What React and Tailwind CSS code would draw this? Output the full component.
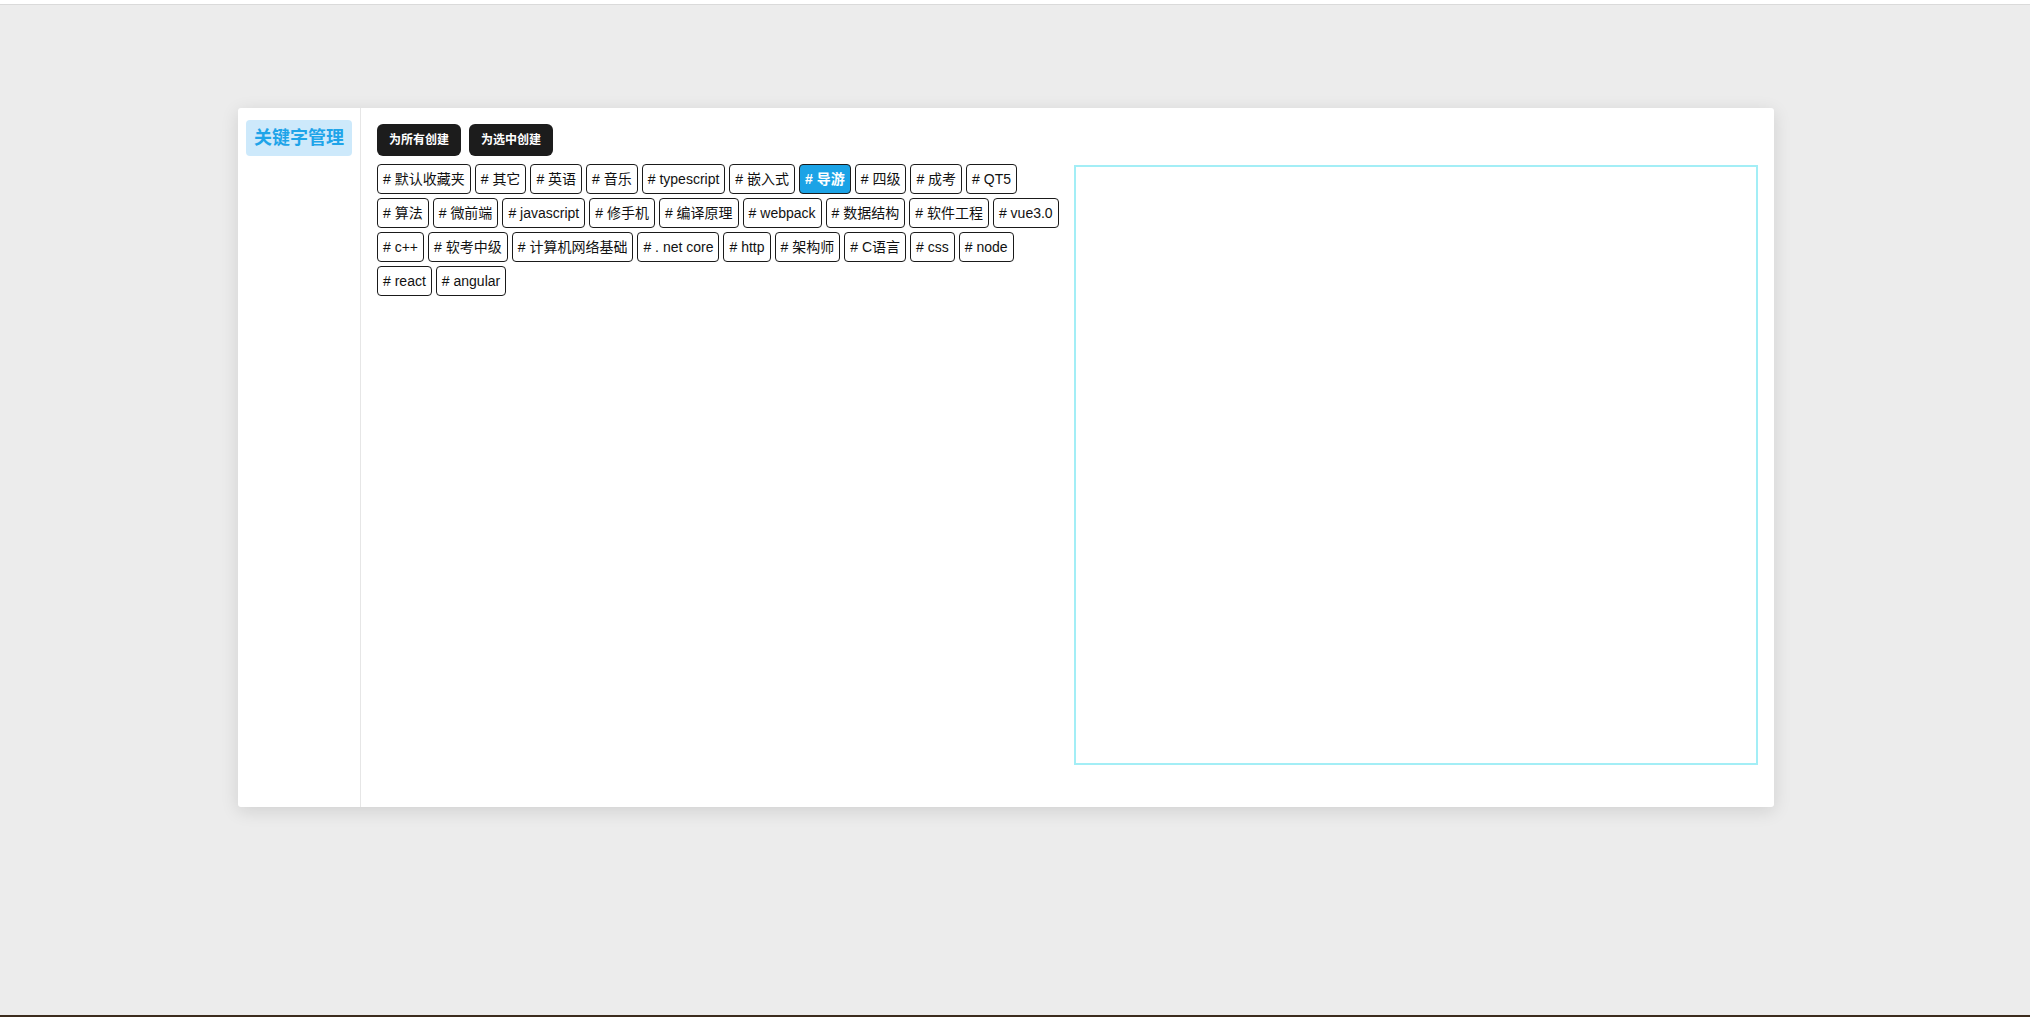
import React from 'react';

const tags = [
  '默认收藏夹', '其它', '英语', '音乐', 'typescript', '嵌入式', '导游', '四级', '成考', 'QT5',
  '算法', '微前端', 'javascript', '修手机', '编译原理', 'webpack', '数据结构', '软件工程', 'vue3.0',
  'c++', '软考中级', '计算机网络基础', '. net core', 'http', '架构师', 'C语言', 'css', 'node',
  'react', 'angular',
];

const Tag = ({ label, active }) => (
  <span
    className={`h-[30px] px-[5px] py-[4px] text-sm leading-5 rounded border ${
      active ? 'bg-[#1ba3e6] border-[#1a1a1a] text-white font-bold' : 'bg-white border-[#1a1a1a] text-[#111]'
    }`}
  >
    # {label}
  </span>
);

const App = () => {
  const [selected, setSelected] = React.useState('导游');

  return (
    <div
      className="h-[1017px] bg-[#ececec] flex flex-col overflow-hidden"
      style={{ fontFamily: '"Liberation Sans", "Noto Sans CJK SC", sans-serif' }}
    >
      <div className="h-[5px] bg-white border-b border-[#dadada]" />

      <div className="flex-1 pt-[103px]">
        {/* Card */}
        <div className="ml-[238px] w-[1536px] h-[699px] bg-white rounded-[3px] shadow-[0_4px_18px_rgba(0,0,0,0.12)] flex">
          {/* Sidebar */}
          <div className="w-[123px] border-r border-[#e6e6e6] pl-2 pt-3">
            <div className="w-[106px] h-9 flex items-center justify-center rounded bg-[#cde9fb] text-[#1ea4e9] text-lg font-bold">
              关键字管理
            </div>
          </div>

          {/* Main */}
          <div className="flex-1 px-4 pt-4">
            <div className="flex gap-2">
              <button className="h-8 px-3 rounded-md bg-[#1c1c1c] text-white text-xs font-bold">为所有创建</button>
              <button className="h-8 px-3 rounded-md bg-[#1c1c1c] text-white text-xs font-bold">为选中创建</button>
            </div>

            <div className="mt-2 grid grid-cols-2 gap-3">
              <div className="flex flex-wrap content-start gap-1">
                {tags.map((t) => (
                  <span key={t} onClick={() => setSelected(t)} className="cursor-pointer flex">
                    <Tag label={t} active={selected === t} />
                  </span>
                ))}
              </div>
              <div className="mt-[1px] h-[600px] border-2 border-[#a3eef6]" />
            </div>
          </div>
        </div>
      </div>

      <div className="h-[2px] bg-[#3b2b1d]" />
    </div>
  );
};

export default App;
